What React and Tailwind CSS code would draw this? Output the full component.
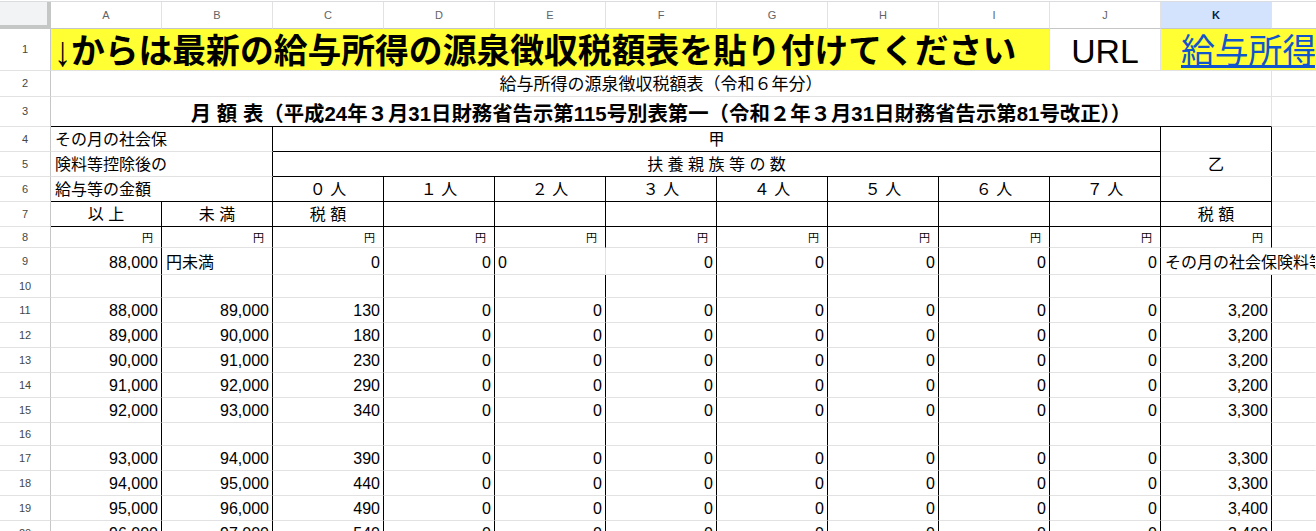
import React from 'react';

const RC = { k: 'border-r-black', g: 'border-r-[#e2e2e2]', n: 'border-r-transparent' };
const BC = { k: 'border-b-black', g: 'border-b-[#e2e2e2]', n: 'border-b-transparent' };
const AL = { r: 'justify-end', l: 'justify-start', c: 'justify-center' };

function Cell({ span = '', r = 'g', b = 'g', a = 'r', clip = true, cls = 'text-[16px] leading-[18px] px-[3px] pb-[2px]', extra = '', children }) {
  return (
    <div
      className={`${span} border-r border-b ${RC[r]} ${BC[b]} flex items-end ${AL[a]} ${cls} ${extra} whitespace-nowrap ${clip ? 'overflow-hidden' : ''} min-w-0 text-black`}
    >
      {children}
    </div>
  );
}

function RowHead({ n }) {
  return (
    <div className="border-r border-b border-r-[#c4c7c5] border-b-[#e2e2e2] flex items-center justify-center text-[11px] text-[#444746]">
      {n}
    </div>
  );
}

const COLS = ['A', 'B', 'C', 'D', 'E', 'F', 'G', 'H', 'I', 'J', 'K'];
const PEOPLE = ['０ 人', '１ 人', '２ 人', '３ 人', '４ 人', '５ 人', '６ 人', '７ 人'];

const DATA = [
  { n: 11, v: ['88,000', '89,000', '130', '3,200'] },
  { n: 12, v: ['89,000', '90,000', '180', '3,200'] },
  { n: 13, v: ['90,000', '91,000', '230', '3,200'] },
  { n: 14, v: ['91,000', '92,000', '290', '3,200'] },
  { n: 15, v: ['92,000', '93,000', '340', '3,300'] },
  { n: 16, v: null },
  { n: 17, v: ['93,000', '94,000', '390', '3,300'] },
  { n: 18, v: ['94,000', '95,000', '440', '3,300'] },
  { n: 19, v: ['95,000', '96,000', '490', '3,400'] },
  { n: 20, v: ['96,000', '97,000', '540', '3,400'] },
];

function DataRow({ n, v }) {
  const zeros = [0, 1, 2, 3, 4, 5, 6];
  return (
    <>
      <RowHead n={n} />
      <Cell r="k">{v ? v[0] : ''}</Cell>
      <Cell r="k">{v ? v[1] : ''}</Cell>
      <Cell r="k">{v ? v[2] : ''}</Cell>
      {zeros.map((z) => (
        <Cell key={z} r="k">{v ? '0' : ''}</Cell>
      ))}
      <Cell r="k">{v ? v[3] : ''}</Cell>
      <Cell r="n" />
    </>
  );
}

export default function App() {
  return (
    <div className="w-[1316px] h-[531px] overflow-hidden bg-white font-['Liberation_Sans','Noto_Sans_CJK_JP',sans-serif]">
      <div className="h-[2px] border-b border-[#dadce0]" />
      <div className="grid grid-cols-[51px_repeat(11,111px)_1fr] grid-rows-[27px_42px_26px_30px_25px_25px_25px_25px_21px_27px_23px_25px_25px_25px_25px_25px_23px_25px_25px_25px_25px]">
        {/* column header */}
        <div className="bg-[#f1f3f4] border-r-[4px] border-b-[4px] border-[#c4c7c5]" />
        {COLS.map((c) => (
          <div
            key={c}
            className={`border-r border-b border-r-[#e2e2e2] border-b-[#c4c7c5] flex items-center justify-center text-[11px] ${
              c === 'K' ? 'bg-[#d3e3fd] text-[#041e49] font-bold' : 'text-[#5f6368]'
            }`}
          >
            {c}
          </div>
        ))}
        <div className="border-b border-b-[#c4c7c5]" />

        {/* row 1 */}
        <RowHead n={1} />
        <Cell span="col-span-9" a="l" clip={false} cls="text-[33.8px] leading-[36px] font-bold pl-[3px] pb-[1px]" extra="bg-[#ffff33]">
          <span className="inline-block scale-y-[1.25]">↓</span>からは最新の給与所得の源泉徴収税額表を貼り付けてください
        </Cell>
        <Cell a="c" cls="text-[33.8px] leading-[36px] pb-[1px]">URL</Cell>
        <Cell span="col-span-2" r="n" a="l" cls="text-[33.8px] leading-[36px] pl-[20px] pb-[1px]" extra="bg-[#ffff33]">
          <span className="text-[#1155cc] underline">給与所得の源泉徴収税額表</span>
        </Cell>

        {/* row 2 */}
        <RowHead n={2} />
        <Cell span="col-span-11" a="c" cls="text-[17px] leading-[18px] pb-[2px]" extra="text-[#222]">
          給与所得の源泉徴収税額表（令和６年分）
        </Cell>
        <Cell r="n" />

        {/* row 3 */}
        <RowHead n={3} />
        <Cell span="col-span-11" b="k" a="c" cls="text-[20.4px] leading-[22px] font-bold pb-[1px]">
          月 額 表（平成24年３月31日財務省告示第115号別表第一（令和２年３月31日財務省告示第81号改正））
        </Cell>
        <Cell r="n" />

        {/* row 4 */}
        <RowHead n={4} />
        <Cell span="col-span-2" r="k" a="l" extra="pl-[4px]">その月の社会保</Cell>
        <Cell span="col-span-8" r="k" b="k" a="c">甲</Cell>
        <Cell r="k" />
        <Cell r="n" />

        {/* row 5 */}
        <RowHead n={5} />
        <Cell span="col-span-2" r="k" a="l" extra="pl-[4px]">険料等控除後の</Cell>
        <Cell span="col-span-8" r="k" b="k" a="c">扶 養 親 族 等 の 数</Cell>
        <Cell r="k" a="c">乙</Cell>
        <Cell r="n" />

        {/* row 6 */}
        <RowHead n={6} />
        <Cell span="col-span-2" r="k" b="k" a="l" extra="pl-[4px]">給与等の金額</Cell>
        {PEOPLE.map((p) => (
          <Cell key={p} r="k" b="k" a="c">{p}</Cell>
        ))}
        <Cell r="k" b="k" />
        <Cell r="n" />

        {/* row 7 */}
        <RowHead n={7} />
        <Cell r="k" b="k" a="c">以 上</Cell>
        <Cell r="k" b="k" a="c">未 満</Cell>
        <Cell r="k" b="k" a="c">税 額</Cell>
        {[0, 1, 2, 3, 4, 5, 6].map((i) => (
          <Cell key={i} r="k" b="k" />
        ))}
        <Cell r="k" b="k" a="c">税 額</Cell>
        <Cell r="n" />

        {/* row 8 */}
        <RowHead n={8} />
        {COLS.map((c) => (
          <Cell key={c} r="k" cls="text-[11px] leading-[13px] pr-[8px] pb-[2px]">円</Cell>
        ))}
        <Cell r="n" />

        {/* row 9 */}
        <RowHead n={9} />
        <Cell r="k">88,000</Cell>
        <Cell r="k" a="l" extra="pl-[4px]">円未満</Cell>
        <Cell r="k">0</Cell>
        <Cell r="k">0</Cell>
        <Cell r="g" a="l">0</Cell>
        <Cell r="k">0</Cell>
        <Cell r="k">0</Cell>
        <Cell r="k">0</Cell>
        <Cell r="k">0</Cell>
        <Cell r="k">0</Cell>
        <Cell span="col-span-2" r="n" a="l" extra="pl-[4px]">
          その月の社会保険料等控除後の給与等の金額の3.063％に相当する金額
        </Cell>

        {/* row 10 */}
        <DataRow n={10} v={null} />

        {DATA.map((d) => (
          <DataRow key={d.n} n={d.n} v={d.v} />
        ))}
      </div>
    </div>
  );
}
